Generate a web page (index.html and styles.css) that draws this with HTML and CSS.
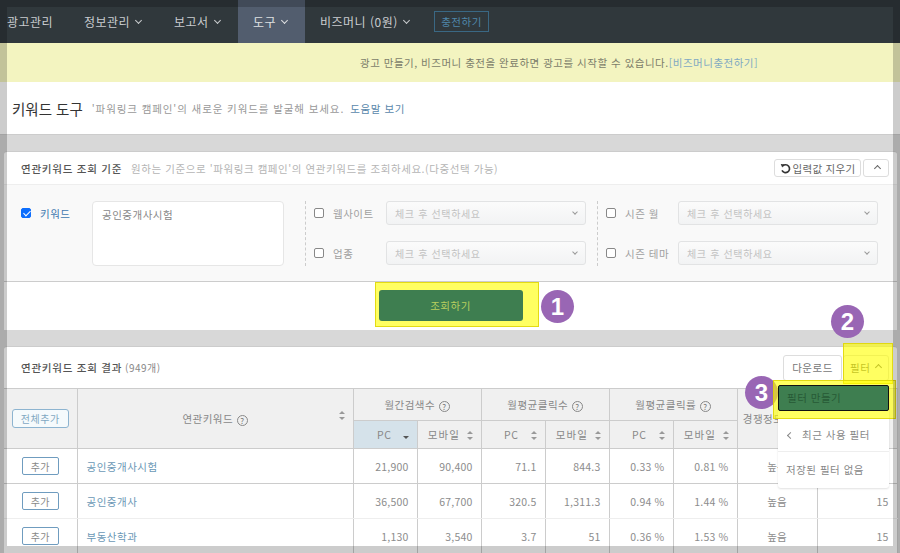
FILE: index.html
```html
<!DOCTYPE html>
<html lang="ko">
<head>
    <meta charset="UTF-8">
    <title>키워드 도구</title>
    <link rel="stylesheet" href="styles.css">
</head>
<body>

    <nav class="topnav">
        <a class="nav-item first">광고관리</a>
        <a class="nav-item info">정보관리 <i class="caret"></i></a>
        <a class="nav-item report">보고서 <i class="caret"></i></a>
        <a class="nav-item active">도구 <i class="caret"></i></a>
        <a class="nav-item money">비즈머니 (0원) <i class="caret"></i></a>
        <a class="charge-btn">충전하기</a>
    </nav>

    <div class="notice">광고 만들기, 비즈머니 충전을 완료하면 광고를 시작할 수 있습니다.<a>[비즈머니충전하기]</a></div>

    <div class="page-title">
        <h1>키워드 도구</h1>
        <span class="page-hint">'파워링크 캠페인'의 새로운 키워드를 발굴해 보세요.</span>
        <a class="help-link">도움말 보기</a>
    </div>

    <section class="panel search-panel">
        <div class="panel-head">
            <strong>연관키워드 조회 기준</strong>
            <span class="panel-hint">원하는 기준으로 '파워링크 캠페인'의 연관키워드를 조회하세요.(다중선택 가능)</span>
            <div class="head-buttons">
                <button class="btn small">
                    <svg width="11" height="11" viewBox="0 0 12 12"><path d="M3 3.2A4.3 4.3 0 1 1 2.2 8" fill="none" stroke="#333" stroke-width="1.8"/><path d="M0.8 1.2 L5 1.6 L2.4 5 Z" fill="#333"/></svg>입력값 지우기
                </button>
                <button class="btn small toggle"><i class="caret up"></i></button>
            </div>
        </div>
        <div class="search-form">
            <div class="keyword-col">
                <label class="check-label keyword-label"><input type="checkbox" checked>키워드</label>
                <div class="keyword-box">공인중개사시험</div>
            </div>
            <div class="filter-col">
                <label class="check-label"><input type="checkbox">웹사이트</label>
                <div class="select">체크 후 선택하세요<i class="caret"></i></div>
                <label class="check-label"><input type="checkbox">업종</label>
                <div class="select">체크 후 선택하세요<i class="caret"></i></div>
            </div>
            <div class="filter-col season">
                <label class="check-label"><input type="checkbox">시즌 월</label>
                <div class="select">체크 후 선택하세요<i class="caret"></i></div>
                <label class="check-label"><input type="checkbox">시즌 테마</label>
                <div class="select">체크 후 선택하세요<i class="caret"></i></div>
            </div>
        </div>
        <div class="search-foot">
            <button class="search-btn">조회하기</button>
        </div>
    </section>

    <section class="panel result-panel">
        <div class="result-head">
            <strong>연관키워드 조회 결과</strong> <span class="count">(949개)</span>
            <div class="head-buttons">
                <button class="btn">다운로드</button>
                <button class="btn filter-btn">필터 <i class="caret up"></i></button>
            </div>
        </div>
        <table class="result-table">
            <colgroup>
                <col class="c-add"><col class="c-kw">
                <col class="c-num"><col class="c-num"><col class="c-num"><col class="c-num"><col class="c-num"><col class="c-num">
                <col class="c-comp"><col class="c-comp">
            </colgroup>
            <thead>
                <tr class="head-top">
                    <th rowspan="2"><button class="add-all">전체추가</button></th>
                    <th rowspan="2" class="kw-head">연관키워드 <i class="q">?</i><i class="sort"></i></th>
                    <th colspan="2">월간검색수 <i class="q">?</i></th>
                    <th colspan="2">월평균클릭수 <i class="q">?</i></th>
                    <th colspan="2">월평균클릭률 <i class="q">?</i></th>
                    <th rowspan="2" class="comp-head">경쟁정도 <i class="q">?</i> <i class="sort"></i></th>
                    <th rowspan="2"></th>
                </tr>
                <tr class="head-sub">
                    <th class="sub-pc sorted">PC <i class="sort-down"></i></th>
                    <th class="sub-mo">모바일 <i class="sort"></i></th>
                    <th class="sub-pc">PC <i class="sort wide"></i></th>
                    <th class="sub-mo">모바일 <i class="sort"></i></th>
                    <th class="sub-pc">PC <i class="sort wide"></i></th>
                    <th class="sub-mo">모바일 <i class="sort"></i></th>
                </tr>
            </thead>
            <tbody>
                <tr>
                    <td class="center"><button class="add-btn">추가</button></td>
                    <td class="kw"><a>공인중개사시험</a></td>
                    <td>21,900</td><td>90,400</td><td>71.1</td><td>844.3</td><td>0.33 %</td><td>0.81 %</td>
                    <td class="center">높음</td><td>15</td>
                </tr>
                <tr>
                    <td class="center"><button class="add-btn">추가</button></td>
                    <td class="kw"><a>공인중개사</a></td>
                    <td>36,500</td><td>67,700</td><td>320.5</td><td>1,311.3</td><td>0.94 %</td><td>1.44 %</td>
                    <td class="center">높음</td><td>15</td>
                </tr>
                <tr>
                    <td class="center"><button class="add-btn">추가</button></td>
                    <td class="kw"><a>부동산학과</a></td>
                    <td>1,130</td><td>3,540</td><td>3.7</td><td>51</td><td>0.36 %</td><td>1.53 %</td>
                    <td class="center">높음</td><td>15</td>
                </tr>
            </tbody>
        </table>
    </section>

    <div class="marker m1">1</div>
    <div class="marker m2">2</div>
    <div class="marker m3">3</div>

    <div class="filter-menu">
        <div class="menu-make">필터 만들기</div>
        <div class="menu-recent"><i class="caret left"></i>최근 사용 필터</div>
        <div class="menu-empty">저장된 필터 없음</div>
    </div>

    <div class="mark-box box1"></div>
    <div class="mark-box box2"></div>
    <div class="mark-box box3"></div>

    <div class="dim-frame"></div>

</body>
</html>
```

FILE: styles.css
```css
* {
    box-sizing: border-box;
}
html, body {
    height: 553px;
    overflow: hidden;
}
body {
    position: relative;
    margin: 0;
    background-color: #d8d8d8;
    font-family: "Noto Sans CJK KR", "Noto Sans", sans-serif;
    font-size: 10.5px;
    letter-spacing: 0.5px;
    color: #666;
}
button {
    font-family: inherit;
    letter-spacing: inherit;
}
i {
    font-style: normal;
}

/* small chevron */
.caret {
    display: inline-block;
    width: 5px;
    height: 5px;
    border-right: 1px solid currentColor;
    border-bottom: 1px solid currentColor;
    transform: rotate(45deg);
    margin: 0 0 3px 3px;
}
.caret.up {
    transform: rotate(225deg);
    margin-bottom: 0;
}
.caret.left {
    transform: rotate(135deg);
    margin: 0 9px 1px 2px;
}

/* top bar */
.topnav {
    display: flex;
    align-items: center;
    height: 43px;
    background-color: #30383c;
    color: #c9cccf;
    font-size: 12px;
}
.nav-item {
    display: flex;
    align-items: center;
    gap: 3px;
    height: 43px;
    white-space: nowrap;
}
.nav-item.first {
    width: 84px;
    padding-left: 7px;
}
.nav-item.info {
    width: 90px;
}
.nav-item.report {
    width: 64px;
}
.nav-item.active {
    width: 67px;
    padding-left: 15px;
    background-color: #525d6e;
    color: #dfe0e2;
}
.nav-item.money {
    width: 129px;
    padding-left: 15px;
}
.charge-btn {
    display: flex;
    align-items: center;
    justify-content: center;
    width: 55px;
    height: 21px;
    margin-top: -1px;
    border: 1px solid #3a6884;
    color: #4f87aa;
    font-size: 10.5px;
}

.notice {
    height: 39px;
    line-height: 39px;
    padding-left: 360px;
    background-color: #f3f4c0;
    color: #7c7d6a;
    white-space: nowrap;
}
.notice a {
    color: #7fa9c2;
}

.page-title {
    display: flex;
    align-items: center;
    height: 53px;
    padding-left: 12px;
    background-color: #fff;
    border-bottom: 1px solid #ccc;
}
.page-title h1 {
    margin: 0 9px 0 0;
    font-size: 14.5px;
    font-weight: 400;
    letter-spacing: 0;
    color: #333;
}
.page-hint {
    color: #999;
    letter-spacing: 0.9px;
}
.help-link {
    margin-left: 6px;
    color: #5a88ab;
    letter-spacing: 0.6px;
}

/* panels */
.panel {
    margin: 16px 3px 0 4px;
    background-color: #fff;
    border-top: 1px solid #ccc;
    border-radius: 3px 3px 0 0;
}
.panel-head {
    display: flex;
    align-items: center;
    height: 33px;
    padding: 0 8px 0 17px;
    border-bottom: 1px solid #eee;
}
.panel-head strong, .result-head strong {
    margin-right: 9px;
    font-weight: 500;
    letter-spacing: 0.75px;
    color: #555;
}
.panel-hint {
    color: #b5b5b5;
    letter-spacing: 0.57px;
    white-space: nowrap;
}
.head-buttons {
    display: flex;
    gap: 2px;
    margin-left: auto;
}
.btn {
    display: flex;
    align-items: center;
    justify-content: center;
    width: 59px;
    height: 26px;
    padding: 0;
    background-color: #fff;
    border: 1px solid #ddd;
    border-radius: 3px;
    color: #777;
    font-size: 10.5px;
}
.btn.small {
    width: 87px;
    height: 18px;
    letter-spacing: 0.3px;
    color: #666;
}
.btn.small svg {
    margin-right: 2px;
}
.btn.toggle {
    width: 26px;
}

/* search form */
.search-form {
    display: flex;
    height: 97px;
    padding: 16px 0 15px 17px;
    background-color: #f9f9f9;
    border-bottom: 1px solid #ccc;
}
.keyword-col {
    display: flex;
    width: 284px;
}
.check-label {
    display: flex;
    align-items: center;
    height: 24px;
    color: #a0a0a0;
    white-space: nowrap;
}
.check-label input {
    appearance: none;
    position: relative;
    flex: none;
    width: 10px;
    height: 10px;
    margin: 0 9px 0 0;
    background-color: #fff;
    border: 1px solid #888;
    border-radius: 2px;
}
.check-label input:checked {
    background-color: #0d6efd;
    border-color: #0d6efd;
}
.check-label input:checked::after {
    content: "";
    position: absolute;
    left: 2.5px;
    top: 0;
    width: 3px;
    height: 6px;
    border-right: 1.5px solid #fff;
    border-bottom: 1.5px solid #fff;
    transform: rotate(45deg);
}
.keyword-label {
    align-self: flex-start;
    width: 71px;
    color: #3f78b0;
}
.keyword-box {
    width: 192px;
    height: 65px;
    padding: 5px 9px;
    background-color: #fff;
    border: 1px solid #e6e6e6;
    border-radius: 4px;
    color: #888;
}
.filter-col {
    display: grid;
    grid-template-columns: 72px 200px;
    grid-template-rows: 24px 24px;
    row-gap: 16px;
    align-items: center;
    width: 292px;
    padding-left: 8px;
    border-left: 1px dashed #ccc;
}
.filter-col.season {
    width: auto;
}
.select {
    display: flex;
    align-items: center;
    justify-content: space-between;
    height: 24px;
    padding: 0 8px;
    background: linear-gradient(#fbfbfb, #f2f3f4);
    border: 1px solid #e2e3e4;
    border-radius: 3px;
    color: #c2c2c2;
    font-size: 10px;
    letter-spacing: 0.65px;
}
.select .caret {
    width: 4px;
    height: 4px;
    color: #999;
}
.search-foot {
    display: flex;
    justify-content: center;
    height: 48px;
    padding-top: 8px;
}
.search-btn {
    position: relative;
    z-index: 1;
    width: 144px;
    height: 31px;
    background-color: #3e7e50;
    border: 0;
    border-radius: 3px;
    color: #b9cf5e;
    font-size: 10.5px;
}

/* results */
.result-head {
    display: flex;
    align-items: center;
    height: 41px;
    padding: 0 8px 0 17px;
    color: #555;
}
.result-head strong {
    margin-right: 3px;
}
.count {
    font-size: 10px;
    color: #888;
}
.result-head .head-buttons {
    gap: 1px;
}
.btn.filter-btn {
    justify-content: space-between;
    width: 46px;
    padding: 0 7px 0 6px;
    color: #666;
}
.result-table {
    width: 893px;
    table-layout: fixed;
    border-collapse: collapse;
}
.c-add { width: 73px; }
.c-kw { width: 276px; }
.c-num { width: 64px; }
.c-comp { width: 80px; }
.result-table th {
    position: relative;
    padding: 0;
    background-color: #f0f0f0;
    border: 1px solid #ccc;
    font-weight: 400;
    color: #888;
}
.result-table th:first-child,
.result-table td:first-child {
    border-left: 0;
}
.head-top {
    height: 32px;
}
.head-sub {
    height: 28px;
}
.result-table th.sub-pc {
    padding-left: 16px;
}
.result-table th.sub-mo {
    padding-left: 4px;
    letter-spacing: 1.2px;
    white-space: nowrap;
}
.result-table th.sorted {
    background-color: #d5e2ea;
}
.result-table td {
    height: 35px;
    padding: 0 8px;
    border: 1px solid #ccc;
    text-align: right;
    letter-spacing: 0.2px;
    color: #8c8c8c;
}
.result-table tbody tr:nth-child(2) td {
    border-bottom-color: #eee;
}
.result-table td.center {
    text-align: center;
}
.result-table td.kw {
    padding-left: 9px;
    text-align: left;
    letter-spacing: 0.5px;
    color: #6b98b6;
}
.kw-head {
    padding-right: 22px;
}
.kw-head .sort {
    position: absolute;
    right: 7px;
    top: 22px;
}
.comp-head {
    white-space: nowrap;
}
.q {
    display: inline-block;
    width: 11px;
    height: 11px;
    line-height: 9px;
    border: 1px solid #888;
    border-radius: 50%;
    font-size: 8px;
    letter-spacing: 0;
    text-align: center;
    vertical-align: -1px;
    color: #777;
}
/* sort arrows */
.sort {
    position: relative;
    display: inline-block;
    width: 7px;
    height: 9px;
    margin-left: 3px;
    vertical-align: -1px;
}
.sort.wide {
    margin-left: 9px;
}
.sort::before, .sort::after {
    content: "";
    position: absolute;
    left: 0;
    border-left: 3.5px solid transparent;
    border-right: 3.5px solid transparent;
}
.sort::before {
    top: 0;
    border-bottom: 3.5px solid #999;
}
.sort::after {
    bottom: 0;
    border-top: 3.5px solid #999;
}
.sort-down {
    display: inline-block;
    margin-left: 8px;
    border-left: 3.5px solid transparent;
    border-right: 3.5px solid transparent;
    border-top: 3.5px solid #555;
}
.add-all {
    width: 57px;
    height: 19px;
    padding: 0;
    background-color: #f5fafc;
    border: 1px solid #8db4d0;
    border-radius: 3px;
    color: #7fa8c2;
    font-size: 10px;
}
.add-btn {
    width: 37px;
    height: 18px;
    padding: 0;
    background-color: #fff;
    border: 1px solid #6f9cbf;
    border-radius: 2px;
    color: #888;
    font-size: 10px;
}

/* markers and highlights drawn on the screenshot */
.marker {
    position: absolute;
    width: 33px;
    height: 33px;
    line-height: 33px;
    border-radius: 50%;
    background-color: #9966b4;
    color: #fff;
    font-family: "Liberation Sans", sans-serif;
    font-weight: 700;
    font-size: 24px;
    letter-spacing: 0;
    text-align: center;
}
.m1 { left: 541px; top: 290px; }
.m2 { left: 831px; top: 305px; }
.m3 { left: 745px; top: 376px; }

.filter-menu {
    position: absolute;
    left: 778px;
    top: 385px;
    width: 111px;
    height: 103px;
    background-color: #fff;
    border-radius: 0 0 3px 3px;
    box-shadow: 0 1px 2px rgba(0, 0, 0, 0.12);
    color: #888;
}
.menu-make {
    position: relative;
    z-index: 3;
    height: 26px;
    line-height: 24px;
    padding-left: 8px;
    background-color: #3e7e50;
    border: 1px solid #111;
    border-radius: 2px;
    color: #275a36;
}
.menu-recent {
    height: 41px;
    line-height: 48px;
    padding-left: 8px;
    border-bottom: 1px solid #eee;
}
.menu-empty {
    padding-left: 8px;
    line-height: 36px;
    white-space: nowrap;
}

.mark-box {
    position: absolute;
    background-color: rgba(255, 255, 0, 0.62);
    border: 1px solid rgba(220, 210, 0, 0.8);
}
.box1 {
    left: 375px;
    top: 282px;
    width: 164px;
    height: 45px;
}
.box2 {
    left: 843px;
    top: 343px;
    width: 50px;
    height: 41px;
}
.box3 {
    left: 773px;
    top: 380px;
    width: 123px;
    height: 39px;
}

/* dark edge of the captured window */
.dim-frame {
    position: absolute;
    left: 0;
    top: 0;
    z-index: 5;
    width: 900px;
    height: 553px;
    border: 7px solid rgba(0, 0, 0, 0.2);
    pointer-events: none;
}
```
